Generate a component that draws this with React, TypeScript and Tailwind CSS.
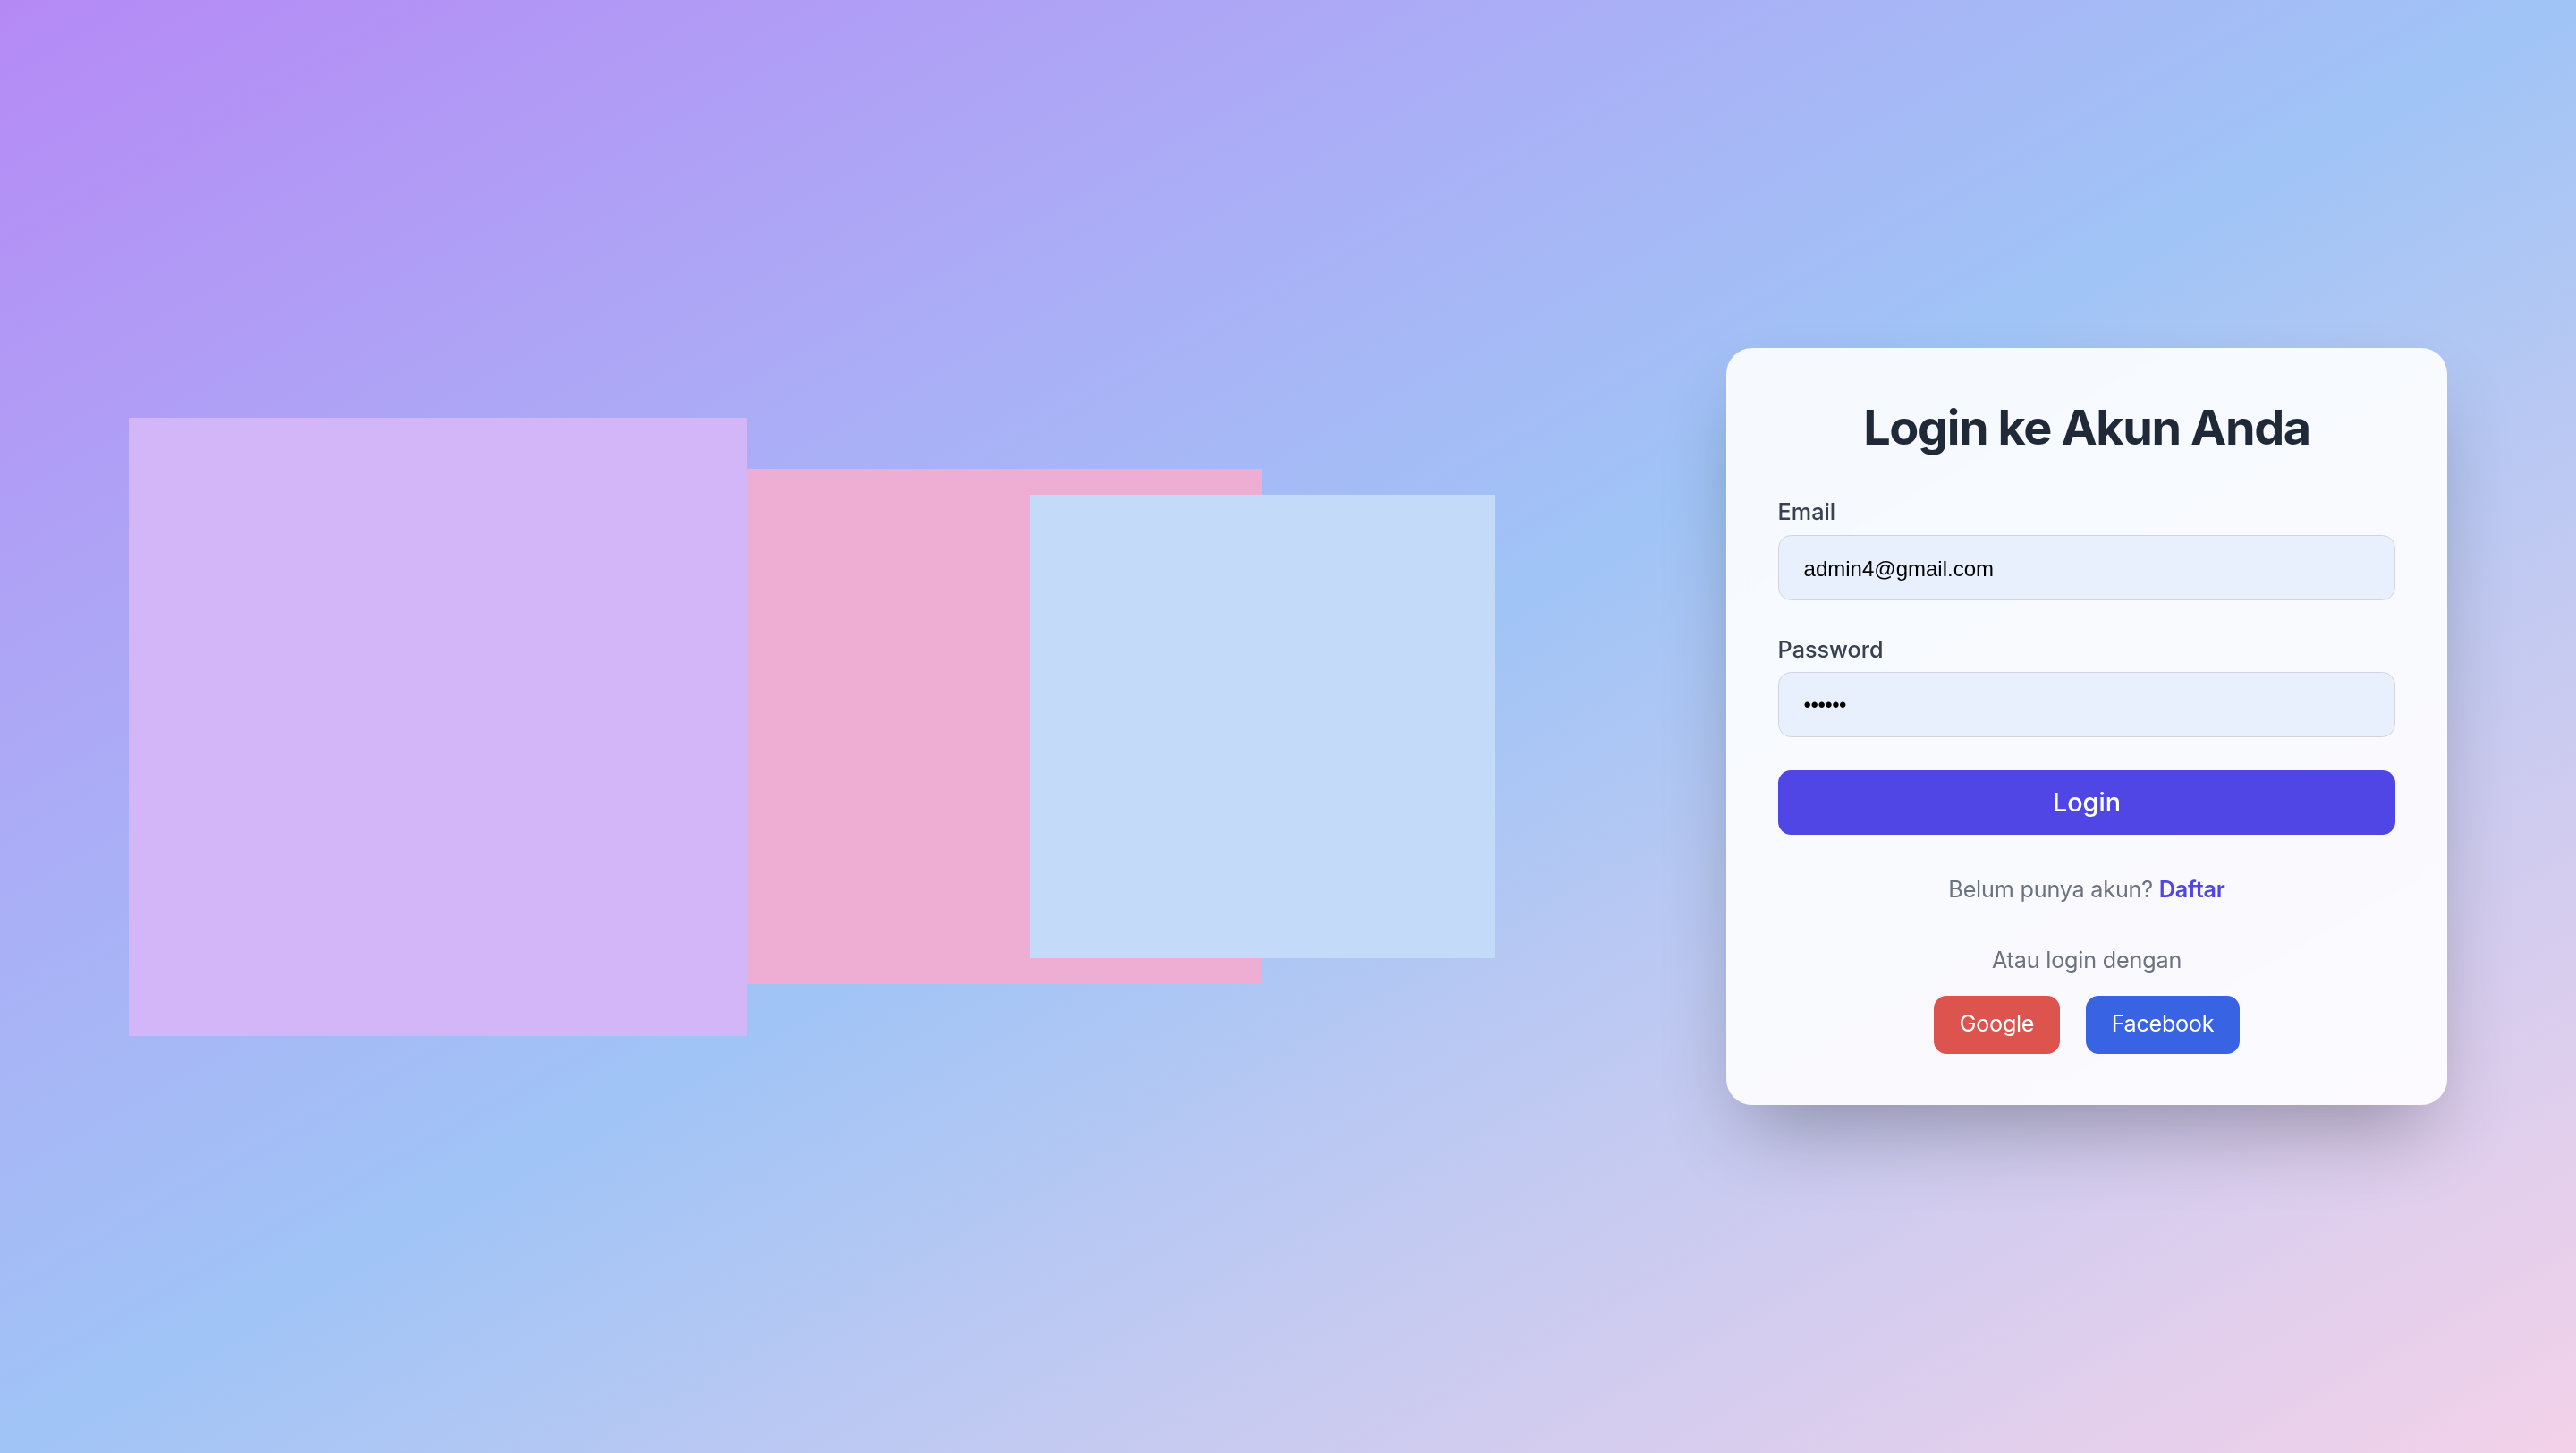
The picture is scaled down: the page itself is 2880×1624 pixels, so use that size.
import React from 'react';

const App: React.FC = () => {
  return (
    <div
      className="h-screen w-screen overflow-hidden bg-gradient-to-br from-[#b589f5] via-[#a0c4f6] to-[#f3d1e9] flex items-center justify-between px-[144px]"
      style={{ fontFamily: 'Inter, "Noto Sans", sans-serif' }}
    >
      {/* Decorative panels */}
      <div className="flex items-center">
        <div className="w-[691px] h-[691px] bg-[#d3b6f7]"></div>
        <div className="w-[576px] h-[576px] bg-[#eeaed3]"></div>
        <div className="w-[519px] h-[518px] -ml-[259px] bg-[#c4daf9] relative"></div>
      </div>

      {/* Login card */}
      <div className="w-[806px] bg-white/90 backdrop-blur-md rounded-[29px] p-[57.6px] shadow-[0_45px_90px_-22px_rgba(0,0,0,0.3)]">
        <h1 className="text-center text-[54px] leading-[64.8px] font-bold text-[#1f2937] tracking-[-1.4px] mb-[43.2px]">
          Login ke Akun Anda
        </h1>

        <div className="mb-[37px]">
          <label className="block text-[25.2px] leading-[36px] font-medium text-[#374151] mb-[7.2px]">Email</label>
          <div className="h-[73px] flex items-center bg-[#e8f0fe] border-[1.8px] border-[#d1d5db] rounded-[14.4px] pl-[28px] pt-[4px]">
            <span className="text-[24px] text-black" style={{ fontFamily: '"Liberation Sans", Arial, sans-serif' }}>
              admin4@gmail.com
            </span>
          </div>
        </div>

        <div className="mb-[37px]">
          <label className="block text-[25.2px] leading-[36px] font-medium text-[#374151] mb-[7.2px]">Password</label>
          <div className="h-[73px] flex items-center bg-[#e8f0fe] border-[1.8px] border-[#d1d5db] rounded-[14.4px] pl-[28px] pt-[2px]">
            <span className="text-[24px] text-black tracking-[-0.5px]" style={{ fontFamily: '"Liberation Sans", Arial, sans-serif' }}>
              ••••••
            </span>
          </div>
        </div>

        <button className="w-full h-[72px] bg-[#4f46e5] text-white text-[28.8px] font-medium rounded-[14.4px]">
          Login
        </button>

        <p className="mt-[43.2px] text-center text-[25.2px] leading-[36px] text-[#6b7280] tracking-[-0.2px]">
          Belum punya akun? <span className="text-[#4f46e5] font-semibold">Daftar</span>
        </p>

        <p className="mt-[43.2px] text-center text-[25.2px] leading-[36px] text-[#6b7280] tracking-[-0.2px]">Atau login dengan</p>

        <div className="mt-[21.6px] flex justify-center gap-[28.8px]">
          <button className="h-[64.8px] px-[28.8px] bg-[#dd534e] text-white text-[25.2px] tracking-[-0.3px] rounded-[14.4px]">
            Google
          </button>
          <button className="h-[64.8px] px-[28.8px] bg-[#3864e4] text-white text-[25.2px] tracking-[-0.3px] rounded-[14.4px]">
            Facebook
          </button>
        </div>
      </div>
    </div>
  );
};

export default App;
